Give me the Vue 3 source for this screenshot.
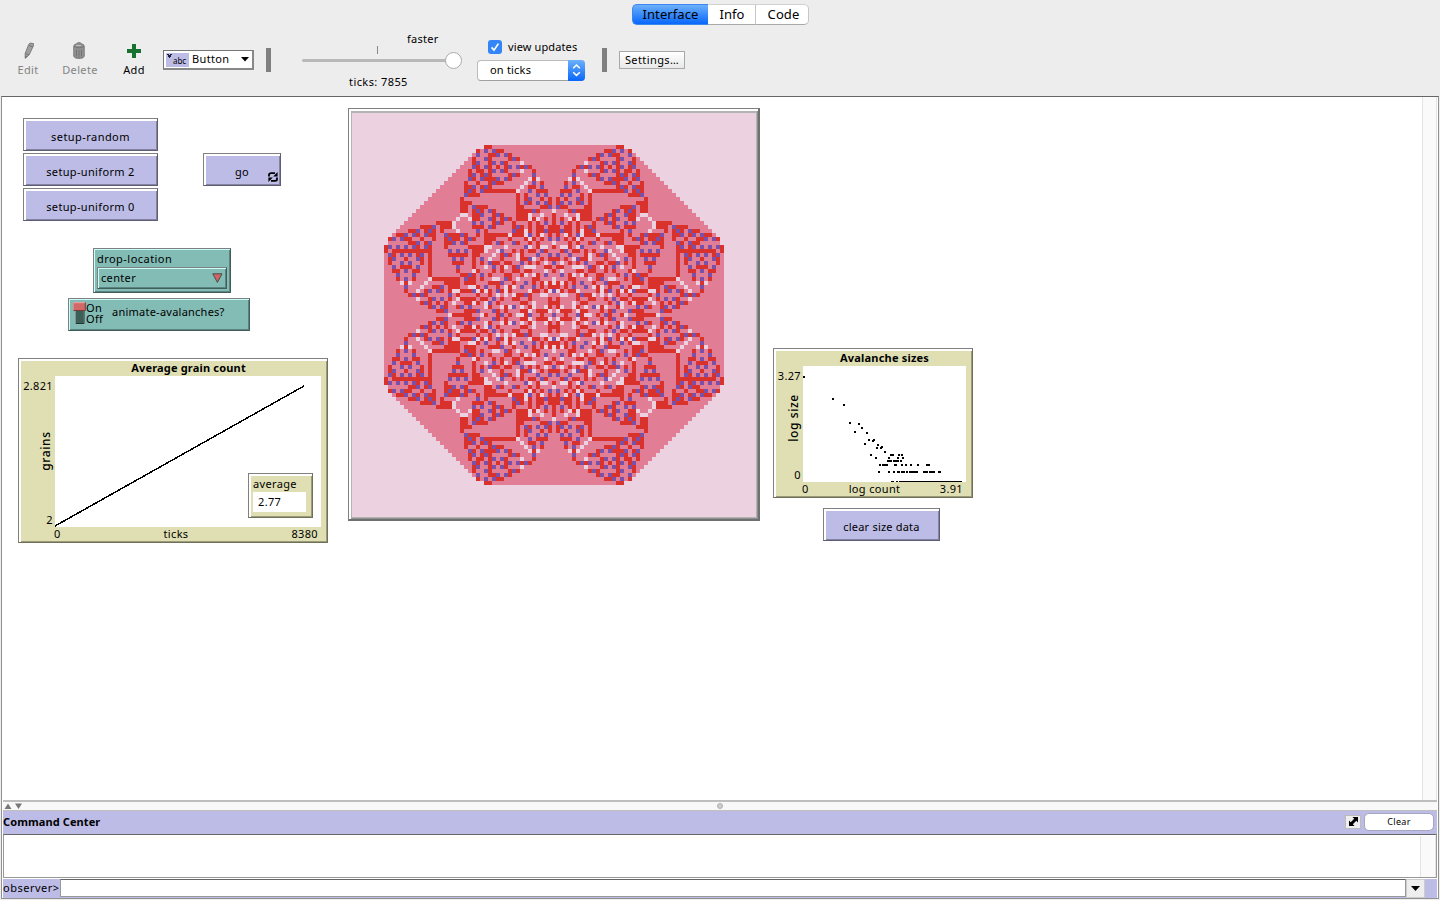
<script setup>
import { ref, onMounted } from 'vue'

const SIZE = 101
const PATCH = 4
const DROPS = 7855
const palette = ['#7b50a8', '#ecd2e1', '#e17e96', '#d9312c']
const colors = [palette[0], palette[1], palette[3], palette[2]]

// Drop grains on the centre patch one at a time, recording how many
// distinct patches topple in each avalanche.
function runSandpile() {
  const grid = new Int32Array(SIZE * SIZE).fill(1)
  const stamp = new Int32Array(SIZE * SIZE)
  const centre = (SIZE * SIZE - 1) / 2
  const counts = new Map()
  const stack = []
  for (let t = 1; t <= DROPS; t++) {
    let size = 0
    grid[centre]++
    if (grid[centre] > 3) stack.push(centre)
    while (stack.length) {
      const i = stack.pop()
      if (grid[i] < 4) continue
      grid[i] -= 4
      if (stamp[i] !== t) { stamp[i] = t; size++ }
      for (const j of [i - 1, i + 1, i - SIZE, i + SIZE]) {
        if (++grid[j] > 3) stack.push(j)
      }
      if (grid[i] > 3) stack.push(i)
    }
    if (size) counts.set(size, (counts.get(size) || 0) + 1)
  }
  return { grid, counts }
}

const { grid, counts } = runSandpile()
const dots = [...counts].map(([size, n]) => ({
  x: Math.floor(Math.log10(size) * 163 / 3.91 + 0.3),
  y: 115 - Math.floor(Math.log10(n) * 116 / 3.27 + 0.2)
}))

const view = ref(null)
onMounted(() => {
  const g = view.value.getContext('2d')
  grid.forEach((n, i) => {
    g.fillStyle = colors[n]
    g.fillRect((i % SIZE) * PATCH, Math.floor(i / SIZE) * PATCH, PATCH, PATCH)
  })
})
</script>

<template>
  <div class="app">
    <nav class="tabs">
      <div class="tab active">Interface</div>
      <div class="tab info">Info</div>
      <div class="tab code">Code</div>
    </nav>

    <header class="toolbar">
      <div class="tool edit">
        <svg width="12" height="18" viewBox="0 0 12 18"><path d="M4.5 3 L6 1 L9.5 1.6 L9.3 4 L5 13 L1.2 16.2 L1.2 11.5 Z" fill="#a0a0a0" stroke="#7c7c7c" /><path d="M4.8 3.4 L8.8 5 M1.5 11.5 L4.8 12.8" stroke="#747474" fill="none" /><path d="M1 16.8 L1.2 13.6 L3.6 14.6 Z" fill="#777" /></svg>
        <span>Edit</span>
      </div>
      <div class="tool delete">
        <svg width="12" height="18" viewBox="0 0 12 18"><path d="M.8 4 Q1 2 4 1.8 L4.5 .8 H7.5 L8 1.8 Q11 2 11.2 4 V14.5 Q10.5 16.4 6 16.4 Q1.5 16.4 .8 14.5 Z" fill="#929292" stroke="#777" /><path d="M1 4.5 Q6 7.5 11 4.5 M3.5 7.5 V14.5 M6 8 V15.5 M8.5 7.5 V14.5" stroke="#727272" fill="none" /><path d="M3 3.5 H8" stroke="#bbb" /></svg>
        <span>Delete</span>
      </div>
      <div class="tool add">
        <svg width="14" height="18" viewBox="0 0 14 18"><path d="M5 2h4v5h5v4H9v5H5v-5H0V7h5z" fill="#17722f" /></svg>
        <span>Add</span>
      </div>
      <div class="combo">
        <div class="swatch">
          <svg width="23" height="14" viewBox="0 0 23 14"><path d="M1 1h2v1H1zM4 1h2v1H4zM2 2h3v2H2zM3 4h1v1H3z" fill="#223" /></svg>
          <i>abc</i>
        </div>
        <span>Button</span>
        <svg class="caret" width="8" height="5" viewBox="0 0 8 5"><path d="M0 0h8L4 4.5z" /></svg>
      </div>
      <div class="sep"></div>
      <div class="speed">
        <div class="faster">faster</div>
        <div class="track"><div class="tick"></div><div class="knob"></div></div>
        <div class="ticks">ticks: 7855</div>
      </div>
      <div class="updates">
        <div class="check-row">
          <div class="checkbox"><svg width="14" height="14" viewBox="0 0 14 14"><path d="M3.6 7.4 L6 10.2 L10.4 3.6" fill="none" stroke="#fff" stroke-width="1.7" /></svg></div>
          <span>view updates</span>
        </div>
        <div class="select">
          <span>on ticks</span>
          <div class="stepper"><svg width="17" height="20" viewBox="0 0 17 20"><path d="M5.2 8.2 L8.5 5 L11.8 8.2 M5.2 12.2 L8.5 15.4 L11.8 12.2" fill="none" stroke="#fff" stroke-width="1.5" /></svg></div>
        </div>
      </div>
      <div class="sep"></div>
      <div class="settings">Settings…</div>
    </header>

    <main class="frame">
      <section class="canvas">
        <div class="w button b1">setup-random</div>
        <div class="w button b2">setup-uniform 2</div>
        <div class="w button b3">setup-uniform 0</div>
        <div class="w button go">go
          <svg class="loop" width="10" height="10" viewBox="0 0 10 10"><path d="M1 4.5 V2.8 Q1 1.2 3 1.2 H7 M9 5.5 V7.2 Q9 8.8 7 8.8 H3" fill="none" stroke="#000" stroke-width="1.8" /><path d="M9.6 0 V4.4 H5.2 Z M.4 10 V5.6 H4.8 Z" /></svg>
        </div>
        <div class="w teal chooser">
          <span class="name">drop-location</span>
          <div class="w teal choice"><span>center</span>
            <svg width="11" height="10" viewBox="0 0 11 10"><path d="M.8 .8 H10 L5.4 9.4 Z" fill="#d06464" stroke="#454f4d" /></svg>
          </div>
        </div>
        <div class="w teal switch">
          <svg width="13" height="23" viewBox="0 0 13 23"><path d="M2.5 5.5h8v16h-8z" fill="#3c5e58" stroke="#84908e" /><path d="M3 21.5 H11 V6" stroke="#223633" fill="none" /><path d="M0 .5h12v8H0z" fill="#d36868" /><path d="M0 8.5V.7H12" fill="none" stroke="#f0a4a4" /><path d="M.5 8.5H12.3V.5" fill="none" stroke="#7b3838" /></svg>
          <div class="onoff"><span>On</span><span>Off</span></div>
          <span class="name">animate-avalanches?</span>
        </div>

        <div class="w olive plot grains">
          <div class="title">Average grain count</div>
          <div class="yaxis"><span>2.821</span><b>grains</b><span>2</span></div>
          <svg class="area" width="266" height="151" viewBox="0 0 266 151" shape-rendering="crispEdges"><path d="M0 150 L249 10" fill="none" stroke="#000" stroke-width="1.5" /></svg>
          <div class="xaxis"><span>0</span><span class="xl">ticks</span><span>8380</span></div>
        </div>
        <div class="w olive monitor"><span>average</span><div>2.77</div></div>

        <div class="w world"><canvas ref="view" width="404" height="404"></canvas></div>

        <div class="w olive plot sizes">
          <div class="title">Avalanche sizes</div>
          <div class="yaxis"><span>3.27</span><b>log size</b><span>0</span></div>
          <svg class="area" width="163" height="116" viewBox="0 0 163 116" shape-rendering="crispEdges">
            <rect v-for="(d, i) in dots" :key="i" :x="d.x" :y="d.y" width="2" height="2" />
          </svg>
          <div class="xaxis"><span>0</span><span class="xl">log count</span><span>3.91</span></div>
        </div>
        <div class="w button clear-data">clear size data</div>
        <div class="scroll"></div>
      </section>

      <div class="splitter">
        <svg width="20" height="8" viewBox="0 0 20 8"><path d="M0.5 6 L4 .5 L7.5 6z M11 .5 H18 L14.5 6z" fill="#777" /></svg>
        <div class="grip"></div>
      </div>
      <div class="cc-head">
        <b>Command Center</b>
        <div class="expand"><svg width="11" height="11" viewBox="0 0 11 11"><path d="M4.5 1H10V6.5L8.3 4.8 4.8 8.3 6.5 10H1V4.5L2.7 6.2 6.2 2.7Z" /></svg></div>
        <div class="clear">Clear</div>
      </div>
      <div class="output"><div class="scroll"></div></div>
      <div class="prompt">
        <label>observer&gt;</label>
        <div class="input"></div>
        <div class="history"><svg width="9" height="5" viewBox="0 0 9 5"><path d="M0 0h9L4.5 5z" /></svg></div>
      </div>
    </main>
  </div>
</template>

<style>
body { margin: 0; background: #ededed; }
</style>

<style scoped>
* { box-sizing: border-box; }
.app { width: 1440px; height: 900px; display: flex; flex-direction: column; background: #ededed; font: 11px/14px "Noto Sans", "Open Sans", sans-serif; letter-spacing: .34px; color: #000; overflow: hidden; white-space: nowrap; }
svg { display: block; flex: none; }
.tabs { display: flex; justify-content: center; padding: 4px 0 0 1px; height: 26px; font-size: 13px; letter-spacing: .1px; }
.tab { height: 21px; line-height: 18px; text-align: center; background: #fff; border: 1px solid #c6c6c6; border-top-color: #d2d2d2; border-bottom-color: #a9a9a9; border-left: 0; }
.active { width: 76px; background: linear-gradient(#6cb0fb, #0867fb); border: 1px solid #3c87ee; border-right: 0; border-radius: 5px 0 0 5px; }
.info { width: 48px; padding-left: 1px; }
.code { width: 53px; padding-left: 3px; border-radius: 0 5px 5px 0; }
.toolbar { height: 70px; display: flex; padding-left: 15px; }
.tool { display: flex; flex-direction: column; align-items: center; padding-top: 16px; gap: 3px; color: #848484; }
.edit { width: 26px; }
.edit svg { margin-left: 3px; }
.delete { width: 36px; margin-left: 21px; }
.delete svg { margin-left: -2px; }
.add { width: 26px; margin-left: 23px; color: #000; }
.combo { width: 91px; height: 20px; margin: 24px 0 0 16px; border: 1px solid #777; border-right: 2px solid #888; border-bottom: 2px solid #888; background: #fff; display: flex; align-items: center; padding-left: 2px; }
.swatch { width: 23px; height: 14px; background: #bcbce6; position: relative; }
.swatch i { position: absolute; left: 7px; top: 1px; font: 8px/14px "Noto Sans", sans-serif; letter-spacing: -.1px; }
.combo span { margin: -2px 0 0 3px; width: 49px; }
.sep { width: 5px; height: 24px; margin: 22px 0 0 12px; background: #808080; }
.speed { width: 160px; margin-left: 31px; padding-top: 6px; position: relative; }
.faster { padding-left: 105px; letter-spacing: .25px; }
.track { width: 151px; height: 3px; margin-top: 13px; background: #b9b9b9; border-radius: 2px; position: relative; }
.tick { position: absolute; left: 75px; top: -13px; width: 1px; height: 8px; background: #888; }
.knob { position: absolute; left: 143px; top: -7px; width: 17px; height: 17px; border-radius: 50%; background: #fff; border: 1px solid #aaa; }
.ticks { padding-left: 47px; margin-top: 13px; letter-spacing: .42px; }
.updates { width: 108px; margin-left: 15px; padding-top: 14px; }
.check-row { display: flex; padding-left: 11px; gap: 6px; height: 20px; letter-spacing: .12px; }
.checkbox { width: 14px; height: 14px; border-radius: 3px; background: #3486f8; }
.select { width: 108px; height: 21px; border: 1px solid #bbb; border-bottom-color: #a0a0a0; border-radius: 4px; background: #fff; display: flex; justify-content: space-between; line-height: 17px; padding-left: 12px; letter-spacing: .2px; }
.stepper { width: 17px; height: 21px; margin: -1px -1px 0 0; background: linear-gradient(#6cb0fb, #0867fb); border-radius: 0 4px 4px 0; }
.updates + .sep { margin-left: 17px; }
.settings { width: 66px; height: 18px; margin: 25px 0 0 12px; border: 1px solid #a8a8a8; background: linear-gradient(#fff, #e8e8e8); line-height: 16px; text-align: center; letter-spacing: .4px; }

.frame { width: 1438px; height: 803px; margin-left: 1px; padding: 0 1px; border: 1px solid #919191; border-top-color: #666; background: #fff; display: flex; flex-direction: column; }
.canvas { height: 703px; position: relative; margin-left: -1px; }
.canvas > .scroll { position: absolute; right: 0; top: 0; width: 15px; height: 703px; background: #fafafa; border-left: 1px solid #e4e4e4; border-right: 1px solid #e4e4e4; }
.w { position: absolute; border: 1px solid #808080; }
.button { background: #bcbce6; border-right-color: #5e5e73; border-bottom-color: #5e5e73; box-shadow: inset 2px 2px #fff, inset -1px -1px #8484a2; text-align: center; height: 33px; padding-top: 11px; }
.b1 { left: 21px; top: 21px; width: 135px; letter-spacing: .45px; }
.b2 { left: 21px; top: 56px; width: 135px; }
.b3 { left: 21px; top: 91px; width: 135px; }
.go { left: 201px; top: 56px; width: 78px; }
.loop { position: absolute; right: 2px; bottom: 3px; }
.clear-data { left: 821px; top: 411px; width: 117px; letter-spacing: .2px; }
.teal { background: #83bbb5; border-right-color: #425e5b; border-bottom-color: #425e5b; box-shadow: inset 1px 1px #c8fffb, inset -1px -1px #5b837f; }
.chooser { left: 91px; top: 151px; width: 138px; height: 45px; padding: 4px 3px; }
.choice { position: relative; width: 130px; height: 22px; display: flex; justify-content: space-between; align-items: center; padding: 0 3px; }
.chooser .name { display: block; height: 14px; line-height: 11px; letter-spacing: .46px; }
.switch { left: 66px; top: 201px; width: 182px; height: 33px; display: flex; padding: 3px 0 0 4px; }
.onoff { display: flex; flex-direction: column; line-height: 11px; width: 26px; }
.switch .name { line-height: 20px; letter-spacing: .24px; }
.olive { background: #dfdfb3; border-right-color: #717158; border-bottom-color: #717158; box-shadow: inset 2px 2px #fff, inset -1px -1px #9b9b7c; }
.plot { display: grid; }
.grains { left: 16px; top: 261px; width: 310px; height: 185px; grid-template: 17px 151px 15px / 36px 266px; }
.sizes { left: 771px; top: 251px; width: 200px; height: 150px; grid-template: 17px 116px 15px / 29px 163px; }
.title { grid-column: 1 / 3; font-weight: 700; letter-spacing: .18px; text-align: center; padding: 2px 0 0 37px; }
.sizes .title { padding-left: 29px; letter-spacing: .2px; }
.yaxis { display: flex; flex-direction: column; justify-content: space-between; align-items: flex-end; padding: 3px 2px 0 0; position: relative; }
.sizes .yaxis { padding-bottom: 0; }
.yaxis b { position: absolute; right: -16px; top: 50%; width: 50px; text-align: center; transform: translateY(-8px) rotate(-90deg); font-size: 12px; font-weight: 500; letter-spacing: .6px; }
.sizes .yaxis b { top: 46%; }
.area { background: #fff; }
.xaxis { grid-column: 2; display: flex; justify-content: space-between; line-height: 13px; padding: 0 3px 0 0; margin-left: -1px; position: relative; }
.xl { position: absolute; left: 1px; width: 242px; text-align: center; }
.sizes .xl { width: 143px; }
.monitor { left: 246px; top: 376px; width: 65px; height: 45px; padding: 4px 0 0 4px; line-height: 11px; }
.monitor span { display: block; height: 13px; }
.monitor div { background: #fff; width: 53px; height: 20px; line-height: 20px; padding-left: 5px; margin-top: 1px; }
.world { left: 346px; top: 11px; width: 412px; height: 413px; padding: 4px 3px; background: #b3b3b3; border-right: 2px solid #707070; border-bottom: 2px solid #707070; box-shadow: inset 2px 2px #fff, inset -1px -1px #8f8f8f; }
.world canvas { display: block; width: 404px; height: 404px; }

.splitter { height: 11px; border-top: 2px solid #bdbdbd; border-bottom: 1px solid #bfbfbf; background: #f8f8f8; position: relative; padding: 1px 0 0 1px; }
.grip { position: absolute; left: 714px; top: 1px; width: 6px; height: 6px; border-radius: 50%; background: #ccc; border: 1px solid #b0b0b0; }
.cc-head { height: 23px; background: #bcbce6; display: flex; align-items: center; padding: 0 3px 2px 0; letter-spacing: .1px; }
.cc-head b { flex: 1; }
.expand { width: 16px; height: 14px; border: 1px solid #bbb; background: #eee; display: flex; align-items: center; justify-content: center; margin-right: 3px; }
.clear { width: 70px; height: 18px; border: 1px solid #a6a6c0; border-radius: 5px; background: #fff; font-size: 9px; line-height: 16px; letter-spacing: .3px; text-align: center; }
.output { height: 44px; margin: 0 0 1px; border: 1px solid #999; border-top-color: #666; position: relative; }
.output .scroll { position: absolute; right: 0; top: 1px; width: 16px; height: 41px; background: #fafafa; border-left: 1px solid #e4e4e4; border-right: 1px solid #e4e4e4; }
.prompt { height: 19px; display: flex; background: #bcbce6; }
.prompt label { width: 57px; line-height: 18px; letter-spacing: .5px; }
.input { width: 1346px; height: 18px; background: #fff; border: 1px solid #999; border-top-color: #666; }
.history { width: 19px; height: 19px; background: #eee; border: 1px solid #ccc; display: flex; align-items: center; justify-content: center; }
</style>
